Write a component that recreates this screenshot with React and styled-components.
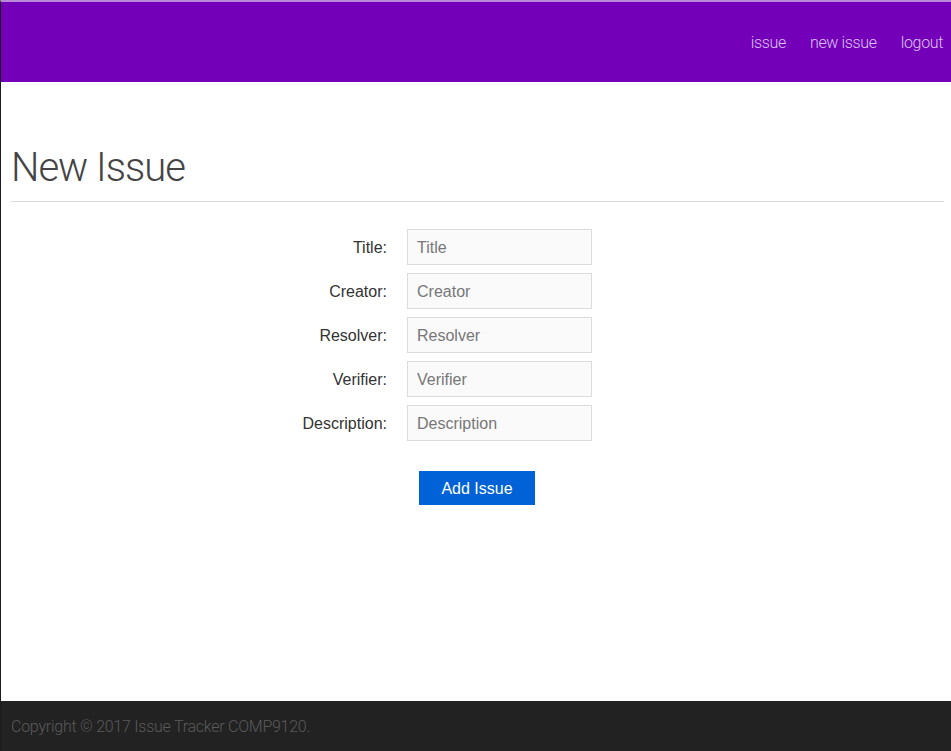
import React from "react";
import styled, { createGlobalStyle } from "styled-components";

const Global = createGlobalStyle`
  html, body { margin: 0; padding: 0; background: #fff; }
  body { font-family: "Liberation Sans", Arial, sans-serif; }
  * { box-sizing: border-box; }
`;

const Page = styled.div`
  min-height: 100vh;
  display: flex;
  flex-direction: column;
  border-left: 1px solid #1c1c1c;
  border-top: 2px solid #b98ad8;
`;

const Header = styled.header`
  height: 80px;
  background: #7300b8;
  display: flex;
  justify-content: flex-end;
  align-items: center;
  padding: 0 8px 0 0;
`;

const Nav = styled.nav`
  display: flex;
  gap: 24px;
`;

const NavLink = styled.a`
  font-family: Roboto, "Liberation Sans", sans-serif;
  font-weight: 300;
  font-size: 16px;
  letter-spacing: -0.35px;
  color: #dcc2f2;
  text-decoration: none;
`;

const Main = styled.main`
  flex: 1;
  padding: 0 7px 0 10px;
`;

const Title = styled.h1`
  font-family: Roboto, "Liberation Sans", sans-serif;
  font-weight: 300;
  font-size: 40px;
  line-height: 44px;
  letter-spacing: -1px;
  color: #444;
  margin: 64px 0 0;
  padding-bottom: 11px;
  border-bottom: 1px solid #dcdcdc;
`;

const Form = styled.form`
  display: grid;
  grid-template-columns: 376px 185px;
  column-gap: 20px;
  row-gap: 8px;
  margin-top: 27px;
`;

const Label = styled.label`
  text-align: right;
  align-self: center;
  padding-top: 2px;
  font-size: 16px;
  color: #333;
`;

const Input = styled.input`
  height: 36px;
  width: 185px;
  background: #fafafa;
  border: 1px solid #dcdcdc;
  padding: 2px 9px 0;
  font-family: "Liberation Sans", Arial, sans-serif;
  font-size: 16px;
  color: #333;
  outline: none;
  &::placeholder { color: #777; }
`;

const ButtonCell = styled.div`
  grid-column: 2;
  padding-top: 22px;
  padding-left: 12px;
`;

const Button = styled.button`
  width: 116px;
  height: 34px;
  background: #0062d6;
  color: #fff;
  border: none;
  font-family: "Liberation Sans", Arial, sans-serif;
  font-size: 16px;
  padding: 2px 0 0;
`;

const Footer = styled.footer`
  height: 50px;
  background: #222;
  display: flex;
  align-items: center;
  padding: 0 10px;
  font-family: Roboto, "Liberation Sans", sans-serif;
  font-weight: 300;
  font-size: 16px;
  letter-spacing: -0.25px;
  color: #5a5a5a;
`;

const fields = ["Title", "Creator", "Resolver", "Verifier", "Description"];

export default function App() {
  return (
    <>
      <Global />
      <Page>
        <Header>
          <Nav>
            <NavLink href="#">issue</NavLink>
            <NavLink href="#">new issue</NavLink>
            <NavLink href="#">logout</NavLink>
          </Nav>
        </Header>
        <Main>
          <Title>New Issue</Title>
          <Form onSubmit={(e) => e.preventDefault()}>
            {fields.map((f) => (
              <React.Fragment key={f}>
                <Label htmlFor={f}>{f}:</Label>
                <Input id={f} placeholder={f} />
              </React.Fragment>
            ))}
            <ButtonCell>
              <Button type="submit">Add Issue</Button>
            </ButtonCell>
          </Form>
        </Main>
        <Footer>Copyright © 2017 Issue Tracker COMP9120.</Footer>
      </Page>
    </>
  );
}
